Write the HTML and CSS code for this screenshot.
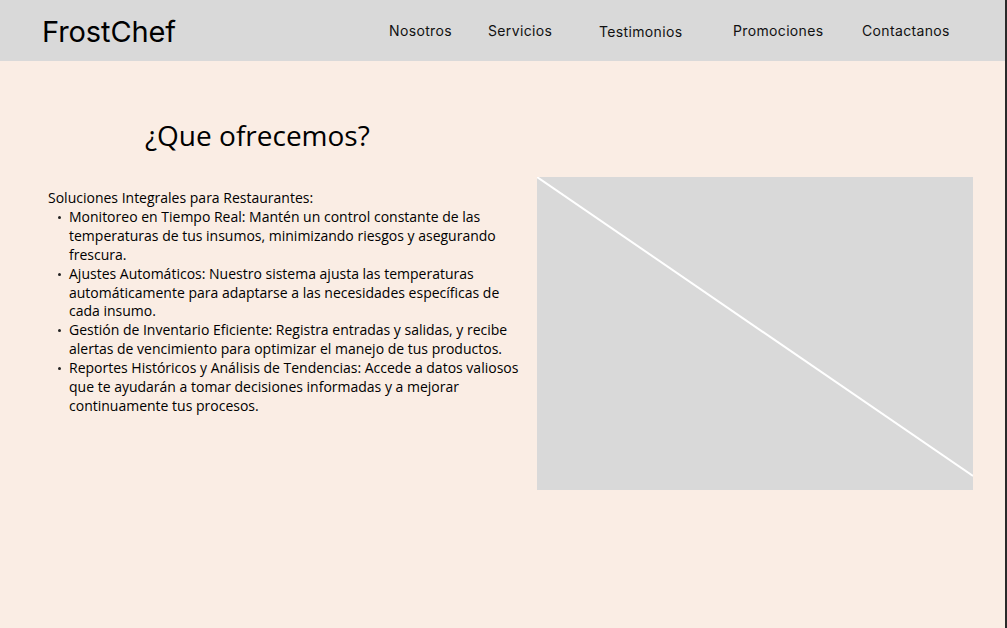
FILE: index.html
```html
<!DOCTYPE html>
<html lang="es">
<head>
<meta charset="utf-8">
<title>FrostChef</title>
<link rel="stylesheet" href="styles.css">
</head>
<body>
<div class="page">
  <header class="topbar">
    <div class="logo">FrostChef</div>
    <nav class="nav">
      <a class="nav-item" href="#">Nosotros</a>
      <a class="nav-item" href="#">Servicios</a>
      <a class="nav-item nav-low" href="#">Testimonios</a>
      <a class="nav-item" href="#">Promociones</a>
      <a class="nav-item" href="#">Contactanos</a>
    </nav>
  </header>
  <main class="content">
    <h2 class="title">¿Que ofrecemos?</h2>
    <div class="row">
      <div class="text">
        <p class="lead">Soluciones Integrales para Restaurantes:</p>
        <ul class="list">
          <li>Monitoreo en Tiempo Real: Mantén un control constante de las temperaturas de tus insumos, minimizando riesgos y asegurando frescura.</li>
          <li>Ajustes Automáticos: Nuestro sistema ajusta las temperaturas automáticamente para adaptarse a las necesidades específicas de cada insumo.</li>
          <li>Gestión de Inventario Eficiente: Registra entradas y salidas, y recibe alertas de vencimiento para optimizar el manejo de tus productos.</li>
          <li>Reportes Históricos y Análisis de Tendencias: Accede a datos valiosos que te ayudarán a tomar decisiones informadas y a mejorar continuamente tus procesos.</li>
        </ul>
      </div>
      <div class="placeholder">
        <svg class="ph-line" viewBox="0 0 436 313" preserveAspectRatio="none" aria-hidden="true">
          <line x1="0" y1="0" x2="436" y2="299" stroke="#ffffff" stroke-width="2"/>
        </svg>
      </div>
    </div>
  </main>
</div>
</body>
</html>
```

FILE: styles.css
```css
html, body {
  margin: 0;
  padding: 0;
  height: 100%;
}

body {
  background: #faede4;
  font-family: "Open Sans", "Noto Sans", sans-serif;
  color: #111;
}

.page {
  min-height: 100%;
  box-sizing: border-box;
  border-right: 2px solid #2a2a2a;
}

.topbar {
  height: 61px;
  background: #d9d9d9;
  display: flex;
  align-items: center;
  justify-content: space-between;
  padding: 0 52px 0 42px;
}

.logo {
  font-family: "Inter", "Noto Sans", sans-serif;
  font-size: 29px;
  font-weight: 400;
  letter-spacing: -0.1px;
  color: #000;
  margin-top: 1px;
}

.nav {
  display: grid;
  grid-template-columns: 99px 111px 134px 129px 91px;
  align-items: center;
}

.nav-item {
  font-family: "Inter", "Noto Sans", sans-serif;
  font-size: 14px;
  letter-spacing: 0.35px;
  color: #111;
  text-decoration: none;
  margin-top: -1px;
}

.nav-low {
  margin-top: 1px;
}

.content {
  padding: 56px 30px 0 48px;
}

.title {
  margin: 0 0 24px 97px;
  font-family: "Open Sans", sans-serif;
  font-weight: 400;
  font-size: 28px;
  line-height: 36px;
  color: #000;
}

.row {
  display: flex;
  align-items: flex-start;
  gap: 13px;
}

.text {
  width: 476px;
  flex: none;
  margin-top: 12px;
  font-size: 14px;
  line-height: 18.9px;
  color: #000;
}

.lead {
  margin: 0;
}

.list {
  margin: 0;
  padding-left: 21px;
  list-style: none;
}

.list li {
  position: relative;
}

.list li::before {
  content: "";
  position: absolute;
  left: -11px;
  top: 8px;
  width: 3px;
  height: 3px;
  border-radius: 50%;
  background: #222;
}

.placeholder {
  width: 436px;
  height: 313px;
  background: #d9d9d9;
  flex: none;
}

.ph-line {
  display: block;
  width: 100%;
  height: 100%;
}
```
